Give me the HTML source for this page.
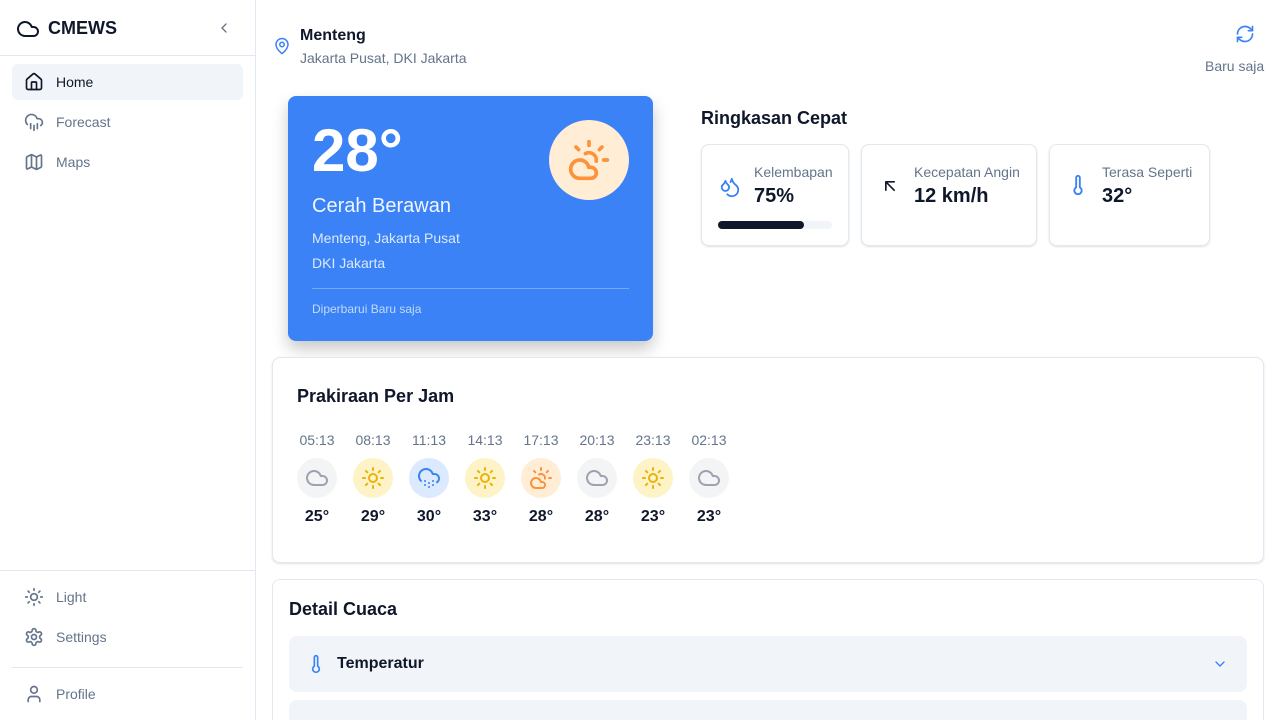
<!DOCTYPE html>
<html><head><meta charset="utf-8"><style>
*{box-sizing:border-box;margin:0;padding:0}
html{width:1280px;height:720px;overflow:hidden}
body{width:1280px;height:720px;overflow:hidden;font-family:"Liberation Sans",sans-serif;background:#fff;position:relative;color:#0f172a}
.abs{position:absolute}
svg{display:block}
.nav{position:absolute;left:12px;width:231px;height:36px;border-radius:6px;display:flex;align-items:center;padding-left:12px;font-size:14px;color:#64748b}
.nav svg{margin-right:12px}
.card{position:absolute;border:1px solid #e2e8f0;border-radius:8px;background:#fff;box-shadow:0 1px 2px rgba(0,0,0,.12)}
.sc .lbl{position:absolute;font-size:14px;color:#64748b;top:19px}
.sc .val{position:absolute;font-size:20px;font-weight:bold;top:40px;color:#0f172a}
.hr{position:absolute;top:432px;width:40px;text-align:center}
.hr .t{font-size:14px;color:#64748b;margin-left:-10px;width:60px}
.hr .c{width:40px;height:40px;border-radius:50%;margin-top:10px;display:flex;align-items:center;justify-content:center}
.hr .v{font-size:16px;font-weight:bold;margin-top:10px;margin-left:-10px;width:60px}
</style></head><body>
<!-- sidebar -->
<div class="abs" style="left:0;top:0;width:256px;height:720px;border-right:1px solid #e2e8f0"></div>
<div class="abs" style="left:0;top:55px;width:255px;height:1px;background:#e2e8f0"></div>
<div class="abs" style="left:16px;top:17px"><svg width="24" height="24" viewBox="0 0 24 24" fill="none" stroke="#0f172a" stroke-width="2" stroke-linecap="round" stroke-linejoin="round"><path d="M17.5 19H9a7 7 0 1 1 6.71-9h1.79a4.5 4.5 0 1 1 0 9Z"/></svg></div>
<div class="abs" style="left:48px;top:18px;font-size:18px;font-weight:bold">CMEWS</div>
<div class="abs" style="left:216px;top:20px"><svg width="16" height="16" viewBox="0 0 24 24" fill="none" stroke="#64748b" stroke-width="2" stroke-linecap="round"><path d="m15 18-6-6 6-6"/></svg></div>
<div class="nav" style="top:64px;background:#f1f5f9;color:#0f172a"><svg width="20" height="20" viewBox="0 0 24 24" fill="none" stroke="#0f172a" stroke-width="2" stroke-linecap="round" stroke-linejoin="round"><path d="M15 21v-8a1 1 0 0 0-1-1h-4a1 1 0 0 0-1 1v8"/><path d="M3 10a2 2 0 0 1 .709-1.528l7-5.999a2 2 0 0 1 2.582 0l7 5.999A2 2 0 0 1 21 10v9a2 2 0 0 1-2 2H5a2 2 0 0 1-2-2z"/></svg>Home</div>
<div class="nav" style="top:104px"><svg width="20" height="20" viewBox="0 0 24 24" fill="none" stroke="#64748b" stroke-width="2" stroke-linecap="round" stroke-linejoin="round"><path d="M4 14.899A7 7 0 1 1 15.71 8h1.79a4.5 4.5 0 0 1 2.5 8.242"/><path d="M16 14v6M8 14v6M12 16v6"/></svg>Forecast</div>
<div class="nav" style="top:144px"><svg width="20" height="20" viewBox="0 0 24 24" fill="none" stroke="#64748b" stroke-width="2" stroke-linecap="round" stroke-linejoin="round"><path d="M14.106 5.553a2 2 0 0 0 1.788 0l3.659-1.830A1 1 0 0 1 21 4.619v12.764a1 1 0 0 1-.553.894l-4.553 2.277a2 2 0 0 1-1.788 0l-4.212-2.106a2 2 0 0 0-1.788 0l-3.659 1.830A1 1 0 0 1 3 19.381V6.618a1 1 0 0 1 .553-.894l4.553-2.277a2 2 0 0 1 1.788 0z"/><path d="M15 5.764v15M9 3.236v15"/></svg>Maps</div>
<div class="abs" style="left:0;top:570px;width:255px;height:1px;background:#e2e8f0"></div>
<div class="nav" style="top:579px"><svg width="20" height="20" viewBox="0 0 24 24" fill="none" stroke="#64748b" stroke-width="2" stroke-linecap="round"><circle cx="12" cy="12" r="4"/><path d="M12 2v2M12 20v2M4.93 4.93l1.41 1.41M17.66 17.66l1.41 1.41M2 12h2M20 12h2M6.34 17.66l-1.41 1.41M19.07 4.93l-1.41 1.41"/></svg>Light</div>
<div class="nav" style="top:619px"><svg width="20" height="20" viewBox="0 0 24 24" fill="none" stroke="#64748b" stroke-width="2" stroke-linecap="round" stroke-linejoin="round"><path d="M12.22 2h-.44a2 2 0 0 0-2 2v.18a2 2 0 0 1-1 1.73l-.43.25a2 2 0 0 1-2 0l-.15-.08a2 2 0 0 0-2.730.73l-.22.38a2 2 0 0 0 .73 2.73l.15.1a2 2 0 0 1 1 1.72v.51a2 2 0 0 1-1 1.74l-.15.09a2 2 0 0 0-.73 2.73l.22.38a2 2 0 0 0 2.73.73l.15-.08a2 2 0 0 1 2 0l.43.25a2 2 0 0 1 1 1.73V20a2 2 0 0 0 2 2h.44a2 2 0 0 0 2-2v-.18a2 2 0 0 1 1-1.73l.43-.25a2 2 0 0 1 2 0l.15.08a2 2 0 0 0 2.73-.73l.22-.39a2 2 0 0 0-.73-2.73l-.15-.08a2 2 0 0 1-1-1.74v-.5a2 2 0 0 1 1-1.74l.15-.09a2 2 0 0 0 .73-2.73l-.22-.38a2 2 0 0 0-2.73-.73l-.15.08a2 2 0 0 1-2 0l-.43-.25a2 2 0 0 1-1-1.73V4a2 2 0 0 0-2-2z"/><circle cx="12" cy="12" r="3"/></svg>Settings</div>
<div class="abs" style="left:12px;top:667px;width:231px;height:1px;background:#e2e8f0"></div>
<div class="nav" style="top:676px"><svg width="20" height="20" viewBox="0 0 24 24" fill="none" stroke="#64748b" stroke-width="2" stroke-linecap="round"><path d="M19 21v-2a4 4 0 0 0-4-4H9a4 4 0 0 0-4 4v2"/><circle cx="12" cy="7" r="4"/></svg>Profile</div>

<!-- header -->
<div class="abs" style="left:273px;top:37px"><svg width="18" height="18" viewBox="0 0 24 24" fill="none" stroke="#3b82f6" stroke-width="2" stroke-linecap="round" stroke-linejoin="round"><path d="M20 10c0 4.993-5.539 10.193-7.399 11.799a1 1 0 0 1-1.202 0C9.539 20.193 4 14.993 4 10a8 8 0 0 1 16 0"/><circle cx="12" cy="10" r="3"/></svg></div>
<div class="abs" style="left:300px;top:27px;font-size:16px;font-weight:bold">Menteng</div>
<div class="abs" style="left:300px;top:50px;font-size:14px;color:#64748b">Jakarta Pusat, DKI Jakarta</div>
<div class="abs" style="left:1235px;top:24px"><svg width="20" height="20" viewBox="0 0 24 24" fill="none" stroke="#3b82f6" stroke-width="2" stroke-linecap="round" stroke-linejoin="round"><path d="M3 12a9 9 0 0 1 9-9 9.75 9.75 0 0 1 6.74 2.74L21 8"/><path d="M21 3v5h-5"/><path d="M21 12a9 9 0 0 1-9 9 9.75 9.75 0 0 1-6.74-2.740L3 16"/><path d="M8 16H3v5"/></svg></div>
<div class="abs" style="left:1205px;top:58px;font-size:14px;color:#64748b">Baru saja</div>

<!-- weather card -->
<div class="abs" style="left:288px;top:96px;width:365px;height:245px;background:#3b82f6;border-radius:8px;box-shadow:0 8px 16px rgba(0,0,0,.22);color:#fff">
 <div class="abs" style="left:24px;top:22px;font-size:60px;font-weight:bold;line-height:66px">28°</div>
 <div class="abs" style="left:261px;top:24px;width:80px;height:80px;border-radius:50%;background:#ffedd5;display:flex;align-items:center;justify-content:center"><svg width="44" height="44" viewBox="0 0 24 24" fill="none" stroke="#fb923c" stroke-width="2" stroke-linecap="round" stroke-linejoin="round"><path d="M12 2v2M4.93 4.93l1.41 1.41M20 12h2M19.07 4.93l-1.41 1.41M15.947 12.65a4 4 0 0 0-5.925-4.128"/><path d="M13 22H7a5 5 0 1 1 4.9-6H13a3 3 0 0 1 0 6Z"/></svg></div>
 <div class="abs" style="left:24px;top:99px;font-size:20px;color:#eff6ff">Cerah Berawan</div>
 <div class="abs" style="left:24px;top:134px;font-size:14px;color:#dbeafe">Menteng, Jakarta Pusat</div>
 <div class="abs" style="left:24px;top:159px;font-size:14px;color:#dbeafe">DKI Jakarta</div>
 <div class="abs" style="left:24px;top:192px;width:317px;height:1px;background:rgba(255,255,255,.3)"></div>
 <div class="abs" style="left:24px;top:206px;font-size:12px;color:#bfdbfe">Diperbarui Baru saja</div>
</div>

<!-- summary -->
<div class="abs" style="left:701px;top:108px;font-size:18px;font-weight:bold">Ringkasan Cepat</div>
<div class="card sc" style="left:701px;top:144px;width:148px;height:102px">
 <div class="abs" style="left:17px;top:31px"><svg width="22" height="22" viewBox="0 0 24 24" fill="none" stroke="#3b82f6" stroke-width="2" stroke-linecap="round" stroke-linejoin="round"><path d="M7 16.3c2.2 0 4-1.83 4-4.05 0-1.16-.57-2.26-1.71-3.19S7.29 6.75 7 5.3c-.29 1.45-1.14 2.84-2.29 3.76S3 11.1 3 12.25c0 2.22 1.8 4.05 4 4.05z"/><path d="M12.56 6.6A10.970 10.970 0 0 0 14 3.02c.5 2.5 2 4.9 4 6.5s3 3.5 3 5.5a6.98 6.98 0 0 1-11.91 4.97"/></svg></div>
 <div class="lbl" style="left:52px">Kelembapan</div><div class="val" style="left:52px">75%</div>
 <div class="abs" style="left:16px;top:76px;width:114px;height:8px;border-radius:4px;background:#f1f5f9"><div style="width:86px;height:8px;border-radius:4px;background:#0f172a"></div></div>
</div>
<div class="card sc" style="left:861px;top:144px;width:176px;height:102px">
 <div class="abs" style="left:18px;top:31px"><svg width="20" height="20" viewBox="0 0 24 24" fill="none" stroke="#0f172a" stroke-width="2" stroke-linecap="round" stroke-linejoin="round"><path d="M7 17V7h10M17 17 7 7"/></svg></div>
 <div class="lbl" style="left:52px">Kecepatan Angin</div><div class="val" style="left:52px">12 km/h</div>
</div>
<div class="card sc" style="left:1049px;top:144px;width:161px;height:102px">
 <div class="abs" style="left:17px;top:29px"><svg width="22" height="22" viewBox="0 0 24 24" fill="none" stroke="#3b82f6" stroke-width="2" stroke-linecap="round" stroke-linejoin="round"><path d="M14 4v10.54a4 4 0 1 1-4 0V4a2 2 0 0 1 4 0Z"/></svg></div>
 <div class="lbl" style="left:52px">Terasa Seperti</div><div class="val" style="left:52px">32°</div>
</div>

<!-- hourly -->
<div class="card" style="left:272px;top:357px;width:992px;height:206px"></div>
<div class="abs" style="left:297px;top:386px;font-size:18px;font-weight:bold">Prakiraan Per Jam</div>
<svg width="0" height="0" style="position:absolute"><defs>
<symbol id="cl" viewBox="0 0 24 24"><path fill="none" stroke="#9ca3af" stroke-width="2" stroke-linecap="round" stroke-linejoin="round" d="M17.5 19H9a7 7 0 1 1 6.71-9h1.79a4.5 4.5 0 1 1 0 9Z"/></symbol>
<symbol id="su" viewBox="0 0 24 24"><g fill="none" stroke="#eab308" stroke-width="2" stroke-linecap="round"><circle cx="12" cy="12" r="4"/><path d="M12 2v2M12 20v2M4.93 4.93l1.41 1.41M17.66 17.66l1.41 1.41M2 12h2M20 12h2M6.34 17.66l-1.41 1.41M19.07 4.93l-1.41 1.41"/></g></symbol>
<symbol id="rn" viewBox="0 0 24 24"><g fill="none" stroke="#3b82f6" stroke-width="2" stroke-linecap="round" stroke-linejoin="round"><path d="M4 14.899A7 7 0 1 1 15.71 8h1.79a4.5 4.5 0 0 1 2.5 8.242"/><path d="M8 15h.01M8 19h.01M12 17h.01M12 21h.01M16 15h.01M16 19h.01"/></g></symbol>
<symbol id="pc" viewBox="0 0 24 24"><g fill="none" stroke="#fb923c" stroke-width="2" stroke-linecap="round" stroke-linejoin="round"><path d="M12 2v2M4.93 4.93l1.41 1.41M20 12h2M19.07 4.93l-1.41 1.41M15.947 12.65a4 4 0 0 0-5.925-4.128"/><path d="M13 22H7a5 5 0 1 1 4.9-6H13a3 3 0 0 1 0 6Z"/></g></symbol>
</defs></svg>
<div class="hr" style="left:297px"><div class="t">05:13</div><div class="c" style="background:#f3f4f6"><svg width="24" height="24"><use href="#cl"/></svg></div><div class="v">25°</div></div>
<div class="hr" style="left:353px"><div class="t">08:13</div><div class="c" style="background:#fef3c7"><svg width="24" height="24"><use href="#su"/></svg></div><div class="v">29°</div></div>
<div class="hr" style="left:409px"><div class="t">11:13</div><div class="c" style="background:#dbeafe"><svg width="24" height="24"><use href="#rn"/></svg></div><div class="v">30°</div></div>
<div class="hr" style="left:465px"><div class="t">14:13</div><div class="c" style="background:#fef3c7"><svg width="24" height="24"><use href="#su"/></svg></div><div class="v">33°</div></div>
<div class="hr" style="left:521px"><div class="t">17:13</div><div class="c" style="background:#ffedd5"><svg width="24" height="24"><use href="#pc"/></svg></div><div class="v">28°</div></div>
<div class="hr" style="left:577px"><div class="t">20:13</div><div class="c" style="background:#f3f4f6"><svg width="24" height="24"><use href="#cl"/></svg></div><div class="v">28°</div></div>
<div class="hr" style="left:633px"><div class="t">23:13</div><div class="c" style="background:#fef3c7"><svg width="24" height="24"><use href="#su"/></svg></div><div class="v">23°</div></div>
<div class="hr" style="left:689px"><div class="t">02:13</div><div class="c" style="background:#f3f4f6"><svg width="24" height="24"><use href="#cl"/></svg></div><div class="v">23°</div></div>

<!-- detail -->
<div class="card" style="left:272px;top:579px;width:992px;height:141px;border-bottom:none;border-bottom-left-radius:0;border-bottom-right-radius:0;box-shadow:none"></div>
<div class="abs" style="left:289px;top:599px;font-size:18px;font-weight:bold">Detail Cuaca</div>
<div class="abs" style="left:289px;top:636px;width:958px;height:56px;background:#f1f5f9;border-radius:8px">
 <div class="abs" style="left:17px;top:18px"><svg width="20" height="20" viewBox="0 0 24 24" fill="none" stroke="#3b82f6" stroke-width="2" stroke-linecap="round" stroke-linejoin="round"><path d="M14 4v10.54a4 4 0 1 1-4 0V4a2 2 0 0 1 4 0Z"/></svg></div>
 <div class="abs" style="left:48px;top:19px;font-size:16px;font-weight:bold">Temperatur</div>
 <div class="abs" style="left:923px;top:20px"><svg width="16" height="16" viewBox="0 0 24 24" fill="none" stroke="#3b82f6" stroke-width="2" stroke-linecap="round"><path d="m6 9 6 6 6-6"/></svg></div>
</div>
<div class="abs" style="left:289px;top:700px;width:958px;height:20px;background:#f1f5f9;border-radius:8px 8px 0 0"></div>
</body></html>
